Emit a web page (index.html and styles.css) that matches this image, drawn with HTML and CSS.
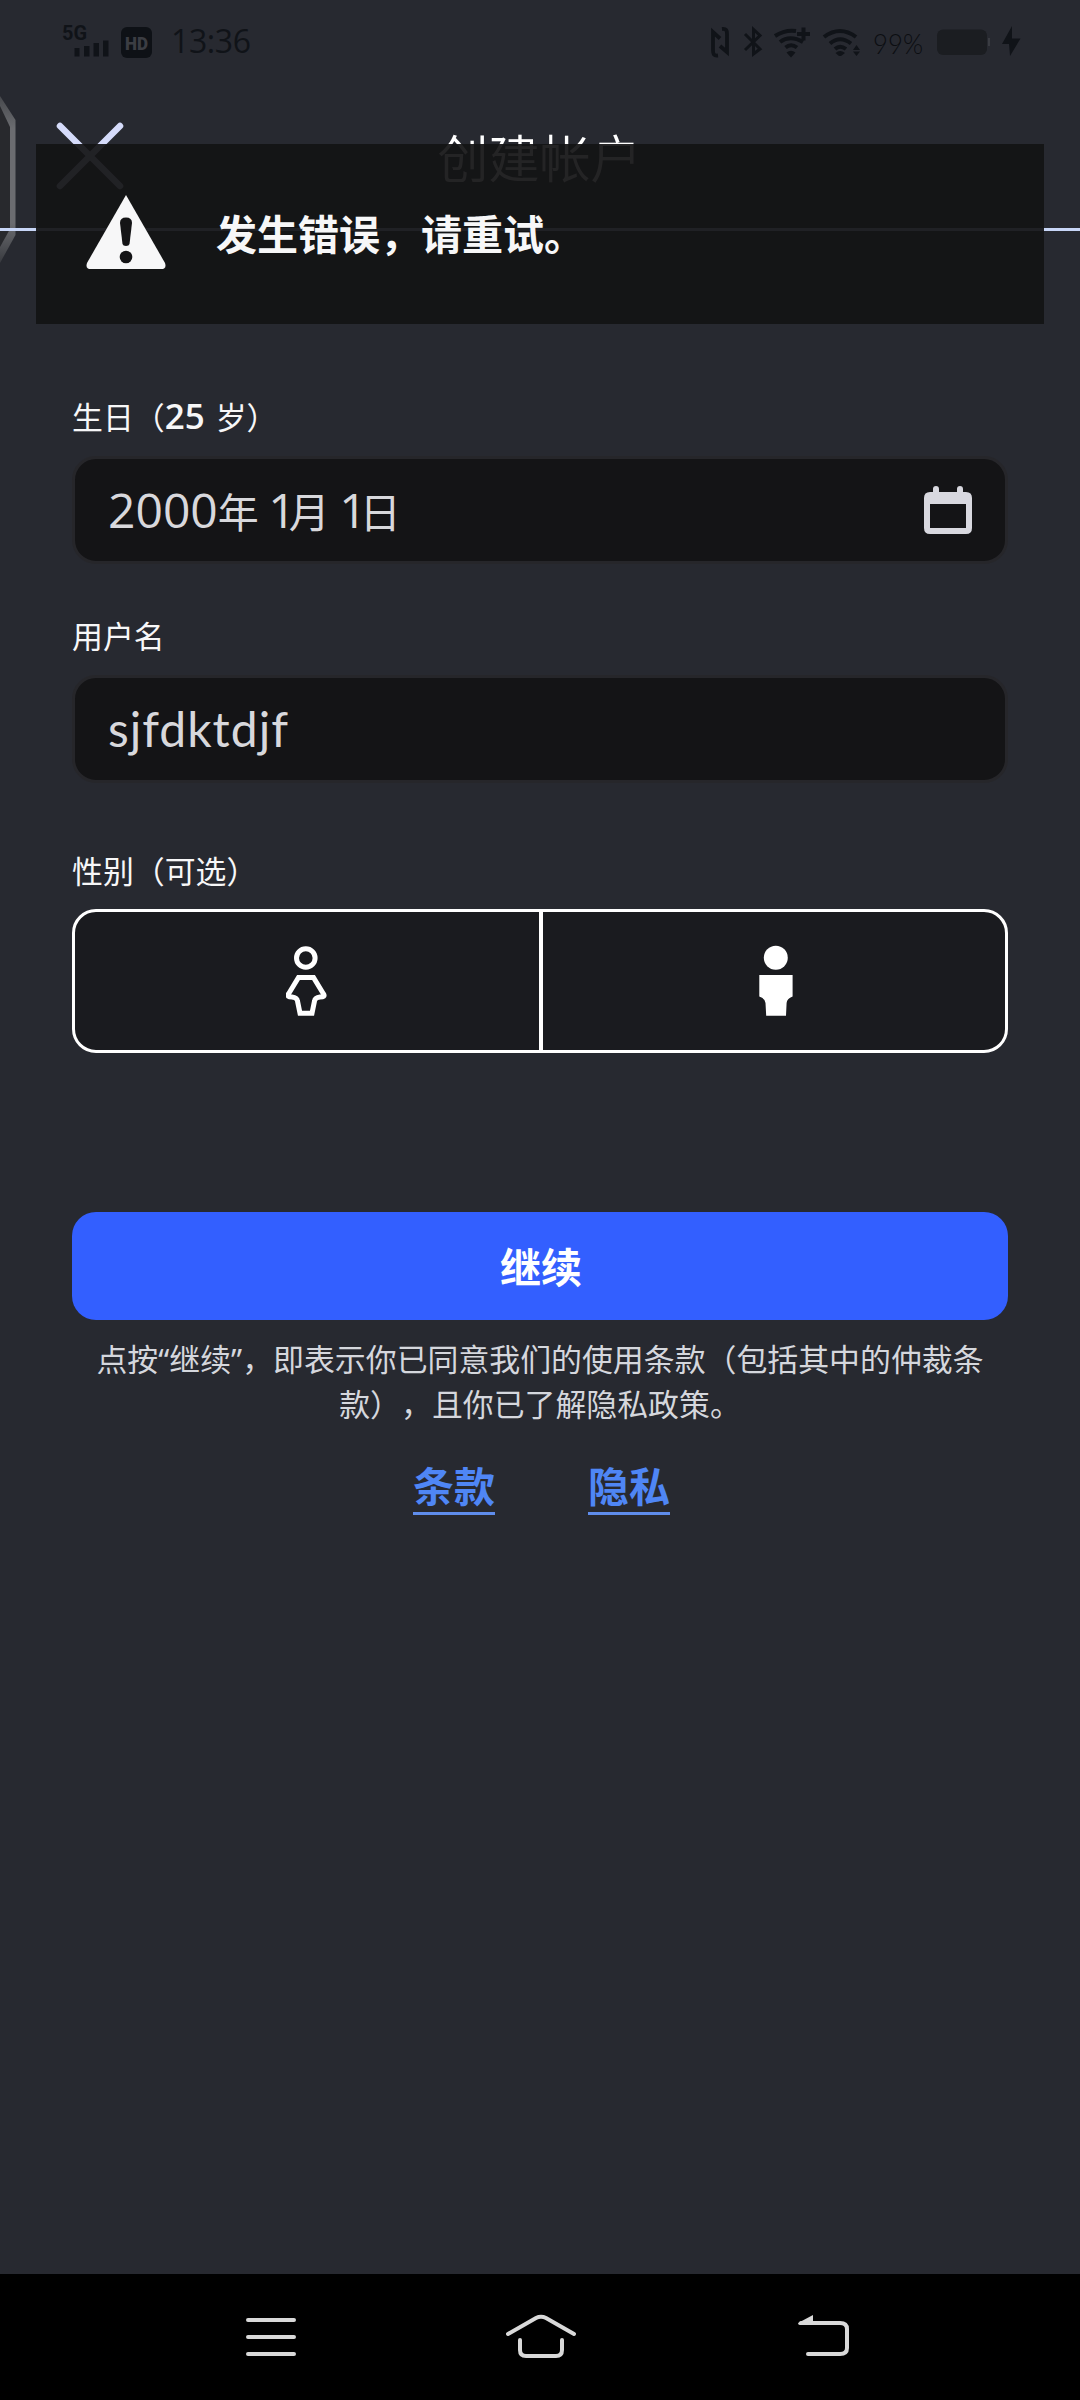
FILE: index.html
```html
<!DOCTYPE html>
<html lang="zh-CN">
<head>
<meta charset="utf-8">
<title>创建帐户</title>
<link rel="stylesheet" href="styles.css">
</head>
<body>
<div class="screen">
  <div class="status">
    <svg class="signal" width="48" height="34" viewBox="0 0 48 34">
      <text class="net" x="0" y="15.500" textLength="25" lengthAdjust="spacingAndGlyphs">5G</text>
      <path d="M12.500 24h5v8.500h-5zM22 22h5.500v10.500H22zM31.500 19h5.500v13.500h-5.500zM41 16.500h5.500v16H41z"/>
    </svg>
    <span class="hd"><svg width="31" height="31" viewBox="0 0 31 31"><rect width="31" height="31" rx="6" fill="#0e1116"/><text class="hdtext" x="4" y="22.500" textLength="23" lengthAdjust="spacingAndGlyphs">HD</text></svg></span>
    <span class="clock">13:36</span>
    <svg class="tray" width="320" height="36" viewBox="704 24 320 36">
      <g fill="none" stroke="#101318" stroke-width="3.800">
        <path d="M718 55.500C713.500 56 713 54 713 50V32L720 38.500M722 29C726.500 28.500 727 30.500 727 34V52L720 46"/>
        <path stroke-width="3" d="M745 34L760 49L753.500 54V29.500L760 35.500L745 50"/>
        <path stroke-width="4" d="M775 36Q785 29.500 796 31M780 42Q790 34.500 803 42M785.500 47.500Q791 43 797 47.500M803.500 27.500v13M797 34h13"/>
        <path stroke-width="4" d="M824 37Q840 25 856 37M830 43.500Q840 35 851 43.500M835 49Q840 44.500 846 49"/>
      </g>
      <path fill="#101318" d="M786.500 52.500Q791 49 795.500 52.500L791 57.500ZM835.500 53Q840 49 845 53L841 56H839ZM856.500 45L860 50H853ZM856.500 56L860 51.500H853ZM1012 26L1002 44H1009L1010 56L1020.500 38.500H1012Z"/>
      <text class="percent" x="873" y="54" textLength="50" lengthAdjust="spacingAndGlyphs">99%</text>
      <rect x="937" y="29.500" width="50" height="25.500" rx="6" fill="#1b1d21"/>
      <path d="M989 38v8" stroke="#3a3c42" stroke-width="2"/>
    </svg>
  </div>
  <header class="header">
    <svg class="edge" width="18" height="172" viewBox="0 94 18 172">
      <defs><linearGradient id="rim" x1="0" y1="94" x2="0" y2="266" gradientUnits="userSpaceOnUse"><stop offset="0" stop-color="#45474b"/><stop offset=".2" stop-color="#6b6c70"/><stop offset=".75" stop-color="#6b6c70"/><stop offset="1" stop-color="#35373c"/></linearGradient></defs>
      <path d="M0 96L15.500 120V235L0 263Z" fill="url(#rim)"/>
      <path d="M0 106L10 127V229L0 247Z" fill="#28292d"/>
      <path d="M0 229.500H18" stroke="#c8d6f7" stroke-width="3"/>
    </svg>
    <svg class="close" width="70" height="70" viewBox="0 0 70 70"><path d="M5 5L65 65M65 5L5 65" stroke="#d5dbfa" stroke-width="6.500" stroke-linecap="round"/></svg>
    <h1 class="title">创建帐户</h1>
  </header>
  <div class="alert" role="alert">
    <svg class="warn" width="80" height="76" viewBox="0 0 80 76">
      <path d="M40 1L79 69Q81 75 75 75H5Q-1 75 1 69Z" fill="#f7f7f8"/>
      <path d="M34 29Q34 23.500 40 23.500T46 29L43.500 50Q43 52 40 52T36.500 50Z" fill="#141416"/><circle cx="40" cy="63" r="6.300" fill="#141416"/>
    </svg>
    <span class="message">发生错误，请重试。</span>
  </div>
  <main class="form">
    <div class="label">生日（<b class="age">25</b> 岁）</div>
    <div class="input">
      <span class="value date">2000<i>年</i> <span class="one">1</span><i>月</i> <span class="one">1</span><i>日</i></span>
      <svg width="48" height="48" viewBox="0 0 48 48" fill="#d8d8df"><path fill-rule="evenodd" d="M6 6H9V3A3 3 0 0 1 15 3V6H33V3A3 3 0 0 1 39 3V6H42Q48 6 48 12V42Q48 48 42 48H6Q0 48 0 42V12Q0 6 6 6ZM6 18V42H42V18Z"/></svg>
    </div>
    <div class="label user-label">用户名</div>
    <div class="input"><span class="value name">sjfdktdjf</span></div>
    <div class="label gender-label">性别（可选）</div>
    <div class="genders">
      <div class="gender">
        <svg width="42" height="72" viewBox="286 945 42 72" fill="none" stroke="#fff" stroke-width="5"><circle cx="305.800" cy="958" r="9.300"/><path d="M298.500 977.500H313.500L323.500 994Q325.500 997 320 997Q315 997.500 314.500 1001L312 1013.200H300L297.500 1001Q297 997.500 292 997Q286.500 997 288.500 994Z"/></svg>
      </div>
      <div class="gender">
        <svg width="42" height="72" viewBox="753 945 42 72" fill="#fff"><circle cx="775.800" cy="957.800" r="12"/><path d="M759.300 975H792.600V996.500Q786.800 998.500 786.600 1003L786 1015.700H766.200L765.500 1003Q765.200 998.500 759.300 996.500Z"/></svg>
      </div>
    </div>
    <div class="submit">继续</div>
    <p class="legal">点按“继续”，即表示你已同意我们的使用条款（包括其中的仲裁条款），且你已了解隐私政策。</p>
    <div class="links"><a>条款</a><a>隐私</a></div>
  </main>
  <nav class="nav">
    <svg width="52" height="46" viewBox="245 2314 52 46"><path d="M248 2320H294M248 2337H294M248 2354H294"/></svg>
    <svg class="home" width="74" height="46" viewBox="504 2314 74 46"><path d="M508 2334L536 2318Q541 2315.500 546 2318L574 2334M520 2340V2350Q520 2356 526 2356H556Q562 2356 562 2350V2340"/></svg>
    <svg width="54" height="46" viewBox="797 2314 54 46"><path d="M808 2354H840Q847 2354 847 2348V2329Q847 2323 840 2323H801"/><path d="M798 2323L813 2315V2325H800Q798 2325 798 2323Z" fill="#d9d9d9" stroke="none"/></svg>
  </nav>
</div>
</body>
</html>
```
FILE: styles.css
```css
* { box-sizing: border-box; }
body { margin: 0; background: #272930; }
.screen {
  width: 1080px; height: 2400px; display: flex; flex-direction: column; overflow: hidden;
  position: relative; background: #272930; color: #f7f7f8;
  font-family: "Noto Sans CJK SC", sans-serif; text-spacing-trim: space-all;
}
.status { height: 84px; padding: 24px 56px 0 62px; display: flex; align-items: flex-start; color: #101318; }
.signal { fill: #101318; overflow: visible; }
.net { font: 700 20px Roboto, sans-serif; }
.hd { margin: 3px 0 0 11px; height: 31px; }
.hd svg { display: block; }
.hdtext { font: 900 18px Roboto, sans-serif; fill: #3b3d43; }
.clock { font: 400 32px/34px "Open Sans", sans-serif; margin-left: 19px; letter-spacing: -.4px; }
.tray { margin-left: auto; }
.percent { font: 300 28px Lato, sans-serif; fill: #0c0e12; }
.header { height: 147px; border-bottom: 3px solid #c8d6f7; display: flex; justify-content: center; position: relative; }
.edge { position: absolute; left: 0; top: 10px; }
.close { position: absolute; left: 55px; top: 37px; }
.title { margin: 34px 1px 0 0; font-size: 51px; line-height: 76px; font-weight: 350; color: #fff; }
.alert {
  position: absolute; left: 36px; top: 144px; width: 1008px; height: 180px; padding-left: 50px;
  display: flex; align-items: center; gap: 50px; background: rgba(19, 19, 20, .93);
  font-size: 41px; font-weight: 700; line-height: 60px;
}
.warn { margin-top: -4px; }
.message { margin-top: -4px; }
.form { flex: 1; padding: 162px 72px 0; display: flex; flex-direction: column; }
.label { height: 46px; line-height: 46px; margin-bottom: 17px; font-size: 30.900px; white-space: pre; }
.age { font: 600 35px/40px "Open Sans", sans-serif; margin-right: 4px; }
.input {
  height: 108px; border: 3px solid #26262a; border-radius: 24px; background: #141416;
  display: flex; align-items: center; justify-content: space-between; padding: 0 33px; color: #d8d8dc;
}
.value { font: 400 48px/60px "Open Sans", sans-serif; }
.value i { font: 400 41px/60px "Noto Sans CJK SC", sans-serif; }
.one { margin-left: -3px; letter-spacing: -7px; }
.name { font-family: Lato, sans-serif; letter-spacing: 1px; }
.user-label { margin-top: 48px; margin-bottom: 17px; }
.gender-label { margin-top: 64px; margin-bottom: 16px; }
.genders { height: 144px; display: grid; grid-template-columns: 464px 1fr; border: 3px solid #fff; border-radius: 24px; background: #1a1b1f; }
.gender { display: flex; align-items: center; justify-content: center; }
.gender + .gender { border-left: 4px solid #fff; }
.submit { margin-top: 159px; height: 108px; padding-left: 2px; border-radius: 24px; background: #335fff; color: #fff; text-align: center; font-size: 41px; font-weight: 700; line-height: 106px; }
.legal { margin: 17px 0 0; padding: 0 8px; color: #d5d7dd; font: 400 30.900px/45px "Noto Sans", "Noto Sans CJK SC", sans-serif; text-align: center; }
.links { margin-top: 29px; padding-left: 3px; display: flex; justify-content: center; gap: 93px; font-size: 41px; font-weight: 700; line-height: 56px; color: #4f86f5; }
.links a { height: 59px; border-bottom: 3px solid #5f8dec; }
.nav { height: 126px; background: #000; display: flex; justify-content: space-between; align-items: center; padding: 0 229px 0 245px; fill: none; stroke: #d9d9d9; stroke-width: 4; stroke-linecap: round; }
.home { margin: 0 6px 0 -6px; }
```
